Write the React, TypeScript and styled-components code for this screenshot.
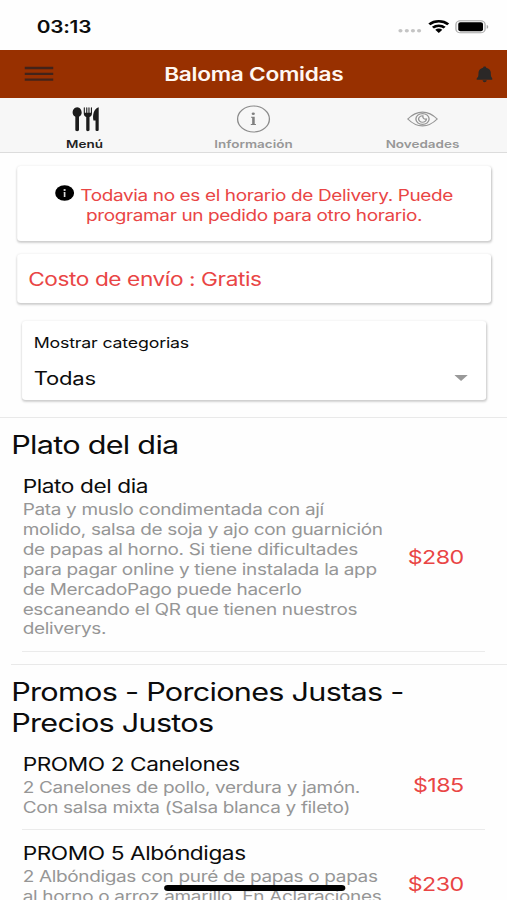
import React from "react";
import styled, { createGlobalStyle } from "styled-components";

const GlobalStyle = createGlobalStyle`
  * { box-sizing: border-box; }
  html, body { margin: 0; padding: 0; overflow: hidden; background: #fefefe; }
`;

const Viewport = styled.div`
  width: 507px;
  height: 900px;
  overflow: hidden;
`;

/* A 414-unit wide phone layout widened to fill the viewport. */
const Screen = styled.div`
  position: relative;
  width: 414px;
  height: 900px;
  overflow: hidden;
  display: flex;
  flex-direction: column;
  transform: scaleX(1.22464);
  transform-origin: 0 0;
  background: #fefefe;
  color: #0c0c0c;
  font-family: Inter, "Liberation Sans", sans-serif;
  white-space: nowrap;
`;

const StatusBar = styled.header`
  flex: none;
  height: 50px;
  padding: 3px 15.5px 0 30px;
  display: flex;
  align-items: center;
  justify-content: space-between;
`;

const Clock = styled.span`
  font-size: 17px;
  font-weight: 600;
  letter-spacing: -0.2px;
  line-height: 20px;
`;

const StatusIcons = styled.svg`
  display: block;
  width: 75px;
  height: 20px;
`;

const AppBar = styled.div`
  flex: none;
  height: 48px;
  padding: 0 12px 0 19.5px;
  display: grid;
  grid-template-columns: 40px 1fr 47px;
  align-items: center;
  background: #983000;
  color: #fff7f2;
`;

const AppTitle = styled.h1`
  margin: 0;
  text-align: center;
  font-size: 18.5px;
  font-weight: 600;
  letter-spacing: -0.23px;
  line-height: 24px;
`;

const BarIcon = styled.svg<{ $w: number; $h: number; $end?: boolean }>`
  display: block;
  width: ${(p) => p.$w}px;
  height: ${(p) => p.$h}px;
  justify-self: ${(p) => (p.$end ? "end" : "start")};
`;

const Tabs = styled.nav`
  flex: none;
  height: 55px;
  display: grid;
  grid-template-columns: repeat(3, 1fr);
  background: #f7f7f7;
  border-bottom: 1px solid #dcdcdc;
`;

const Tab = styled.div<{ $active?: boolean }>`
  display: flex;
  flex-direction: column;
  align-items: center;
  padding-top: 6px;
  color: ${(p) => (p.$active ? "#222" : "#989898")};
`;

const TabIcon = styled.svg`
  display: block;
  width: 28px;
  height: 30px;
`;

const TabLabel = styled.span`
  margin-top: 3px;
  font-size: 11px;
  font-weight: 600;
  line-height: 14px;
`;

const Card = styled.section<{ $h: number; $mt: number; $inset: number }>`
  flex: none;
  height: ${(p) => p.$h}px;
  margin: ${(p) => p.$mt}px ${(p) => p.$inset - 1}px 0 ${(p) => p.$inset}px;
  border-radius: 3px;
  background: #fff;
  box-shadow: 0 2px 2px rgba(0, 0, 0, 0.17), 0 0 2px rgba(0, 0, 0, 0.1);
`;

const Notice = styled.p`
  margin: 0;
  padding-top: 19px;
  text-align: center;
  color: #e94545;
  font-size: 15.5px;
  letter-spacing: -0.3px;
  line-height: 20px;
`;

const NoticeIcon = styled.svg`
  width: 15.5px;
  height: 16px;
  margin-right: 5px;
  vertical-align: 0;
`;

const Shipping = styled.p`
  margin: 0;
  padding: 13px 9px 0;
  color: #e94545;
  font-size: 18.5px;
  letter-spacing: -0.34px;
  line-height: 24px;
`;

const Filter = styled.div`
  padding: 12px 15px 0 9.5px;
`;

const FilterLabel = styled.div`
  font-size: 14.5px;
  letter-spacing: -0.15px;
  line-height: 20px;
`;

const FilterValue = styled.div`
  margin-top: 14px;
  display: flex;
  align-items: center;
  justify-content: space-between;
  font-size: 18px;
  letter-spacing: -0.15px;
  line-height: 24px;
`;

const Caret = styled.svg`
  width: 11px;
  height: 6px;
  margin-top: -3px;
`;

const Group = styled.section<{ $mt: number; $left: number }>`
  flex: none;
  margin: ${(p) => p.$mt}px 0 0 ${(p) => p.$left}px;
  padding: 12px 0 0 ${(p) => 9.2 - p.$left}px;
  border-top: 1px solid #e9e9e9;
`;

const GroupTitle = styled.h2`
  margin: 0 0 2px;
  font-size: 25px;
  font-weight: 400;
  letter-spacing: -0.6px;
  line-height: 31px;
`;

const Item = styled.article<{ $h: number }>`
  height: ${(p) => p.$h}px;
  margin: 0 18px 0 8.8px;
  padding: 0 17.5px 0 0.5px;
  display: flex;
  align-items: center;
  justify-content: space-between;
  border-bottom: 1px solid #ebebeb;
`;

const ItemText = styled.div`
  align-self: flex-start;
`;

const ItemTitle = styled.h3`
  margin: 0;
  font-size: 18.5px;
  font-weight: 400;
  letter-spacing: -0.34px;
  line-height: 24px;
  padding-top: 11px;
`;

const ItemBody = styled.p`
  margin: 2px 0 0;
  color: #969696;
  font-size: 15.5px;
  letter-spacing: -0.27px;
  line-height: 19.9px;
`;

const Price = styled.span`
  padding-top: 1px;
  color: #e94545;
  font-size: 19px;
  letter-spacing: -0.5px;
  line-height: 24px;
`;

const HomeIndicator = styled.div`
  position: absolute;
  left: 133.5px;
  top: 885px;
  width: 148px;
  height: 6px;
  border-radius: 3px;
  background: #000;
`;

const lines = (rows: string[]) =>
  rows.map((row, i) => (
    <React.Fragment key={i}>
      {i > 0 && <br />}
      {row}
    </React.Fragment>
  ));

interface Dish {
  name: string;
  body: string[];
  price: string;
  height: number;
}

const dishOfTheDay: Dish[] = [
  {
    name: "Plato del dia",
    body: [
      "Pata y muslo condimentada con ají",
      "molido, salsa de soja y ajo con guarnición",
      "de papas al horno. Si tiene dificultades",
      "para pagar online y tiene instalada la app",
      "de MercadoPago puede hacerlo",
      "escaneando el QR que tienen nuestros",
      "deliverys.",
    ],
    price: "$280",
    height: 189,
  },
];

const promos: Dish[] = [
  {
    name: "PROMO 2 Canelones",
    body: ["2 Canelones de pollo, verdura y jamón.", "Con salsa mixta (Salsa blanca y fileto)"],
    price: "$185",
    height: 89,
  },
  {
    name: "PROMO 5 Albóndigas",
    body: ["2 Albóndigas con puré de papas o papas", "al horno o arroz amarillo. En Aclaraciones"],
    price: "$230",
    height: 109,
  },
];

const Dishes = ({ items }: { items: Dish[] }) => (
  <>
    {items.map((d) => (
      <Item key={d.name} $h={d.height}>
        <ItemText>
          <ItemTitle>{d.name}</ItemTitle>
          <ItemBody>{lines(d.body)}</ItemBody>
        </ItemText>
        <Price>{d.price}</Price>
      </Item>
    ))}
  </>
);

export default function App() {
  return (
    <Viewport>
      <GlobalStyle />
      <Screen>
        <StatusBar>
          <Clock>03:13</Clock>
          <StatusIcons viewBox="0 0 75 20">
            <g fill="#c4c4c4">
              <circle cx="3" cy="13.8" r="1.7" />
              <circle cx="8.2" cy="13.8" r="1.7" />
              <circle cx="13.2" cy="13.8" r="1.7" />
              <circle cx="18.2" cy="13.8" r="1.7" />
            </g>
            <g fill="none" stroke="#000" strokeWidth="2.4">
              <path d="M26.6 7.4a11 10.8 0 0 1 15.4 0" />
              <path d="M29.5 10.6a7 6.8 0 0 1 9.6 0" />
            </g>
            <path d="M31.4 12.8a4.2 4 0 0 1 5.8 0L34.3 16z" fill="#000" />
            <rect x="48.3" y="3.8" width="23.8" height="12" rx="3.6" fill="#f6f6f6" stroke="#a8a8a8" />
            <rect x="50.2" y="5.3" width="20.2" height="9" rx="1.8" fill="#000" />
            <path d="M73.4 7.9c1.8.6 1.8 3.2 0 3.8z" fill="#a8a8a8" />
          </StatusIcons>
        </StatusBar>

        <AppBar>
          <BarIcon $w={24} $h={16} viewBox="0 0 24 16">
            <path d="M0 2h23.5M0 7.8h23.5M0 13.6h23.5" stroke="#42231a" strokeWidth="2.3" />
          </BarIcon>
          <AppTitle>Baloma Comidas</AppTitle>
          <BarIcon $w={13.5} $h={17} $end viewBox="0 0 14 17" preserveAspectRatio="none">
            <path
              d="M7 .5c.8 0 1.3.5 1.3 1.2 2.3.6 3.9 2.4 3.9 4.9 0 3.7.3 4.8 1.7 5.9v1.2H.1v-1.2c1.4-1.1 1.7-2.2 1.7-5.9 0-2.5 1.6-4.3 3.9-4.9C5.7 1 6.2.5 7 .5zM5.2 14.2h3.6c-.2 1.2-.9 2-1.8 2s-1.6-.8-1.8-2z"
              fill="#2b2827"
            />
          </BarIcon>
        </AppBar>

        <Tabs>
          <Tab $active>
            <TabIcon viewBox="0 0 28 30">
              <g fill="#1c1c1c">
                <path d="M8 3.2c2.300 0 3.700 2.800 3.700 5.500 0 2-1 3.300-2.200 4V26c0 1.500-3 1.500-3 0V12.700c-1.200-.7-2.200-2-2.200-4C4.300 6 5.700 3.200 8 3.200z" />
                <path d="M13.400 3.800c0-.8.9-.8.9 0v5h1.100v-5c0-.8.9-.8.9 0v5h.9v-5c0-.8.9-.8.9 0v5h1.100v-5c0-.8.9-.8.9 0v5.400c0 2.200-.8 3.200-2 3.800V26c0 1.500-2.700 1.500-2.700 0V13c-1.200-.6-2-1.600-2-3.800z" />
                <path d="M25.600 3.200V26c0 1.300-2.600 1.300-2.600 0v-9.500h-1.700c-.9-5 .1-11.700 4.300-13.300z" />
              </g>
            </TabIcon>
            <TabLabel>Menú</TabLabel>
          </Tab>
          <Tab>
            <TabIcon viewBox="0 0 28 30">
              <circle cx="14" cy="15" r="13" fill="none" stroke="#8c8c8c" strokeWidth="1.1" />
              <circle cx="13.8" cy="9.8" r="1.3" fill="#808080" />
              <path d="M12 12.700h3v7.300h1v1h-4.200v-1h1.100v-6.300H12z" fill="#808080" />
            </TabIcon>
            <TabLabel>Información</TabLabel>
          </Tab>
          <Tab>
            <TabIcon viewBox="0 0 28 30">
              <g fill="none" stroke="#969696" strokeWidth="1.1">
                <path d="M2 15C9.500 5.800 18.500 5.800 26 15 18.500 24.200 9.500 24.200 2 15z" />
                <circle cx="14" cy="15" r="5.400" />
                <path d="M14.300 11.800a3.200 3.200 0 1 0 2.900 3.200c-1.500.6-3.200-.5-2.900-3.200z" />
              </g>
            </TabIcon>
            <TabLabel>Novedades</TabLabel>
          </Tab>
        </Tabs>

        <Card $h={75} $mt={13} $inset={14}>
          <Notice>
            <NoticeIcon viewBox="0 0 16 16">
              <circle cx="8" cy="8" r="8" fill="#000" />
              <circle cx="8" cy="4.900" r="1" fill="#ddd" />
              <path d="M7.200 7h1.500v5H7.300V7.700h-.1z" fill="#ddd" />
            </NoticeIcon>
            {lines(["Todavia no es el horario de Delivery. Puede", "programar un pedido para otro horario."])}
          </Notice>
        </Card>

        <Card $h={49} $mt={13} $inset={14}>
          <Shipping>Costo de envío : Gratis</Shipping>
        </Card>

        <Card $h={79} $mt={18} $inset={18}>
          <Filter>
            <FilterLabel>Mostrar categorias</FilterLabel>
            <FilterValue>
              Todas
              <Caret viewBox="0 0 11 6">
                <path d="M0 0h11L5.500 6z" fill="#999" />
              </Caret>
            </FilterValue>
          </Filter>
        </Card>

        <Group $mt={17} $left={0}>
          <GroupTitle>Plato del dia</GroupTitle>
          <Dishes items={dishOfTheDay} />
        </Group>

        <Group $mt={12} $left={9.2}>
          <GroupTitle>{lines(["Promos - Porciones Justas -", "Precios Justos"])}</GroupTitle>
          <Dishes items={promos} />
        </Group>

        <HomeIndicator />
      </Screen>
    </Viewport>
  );
}
